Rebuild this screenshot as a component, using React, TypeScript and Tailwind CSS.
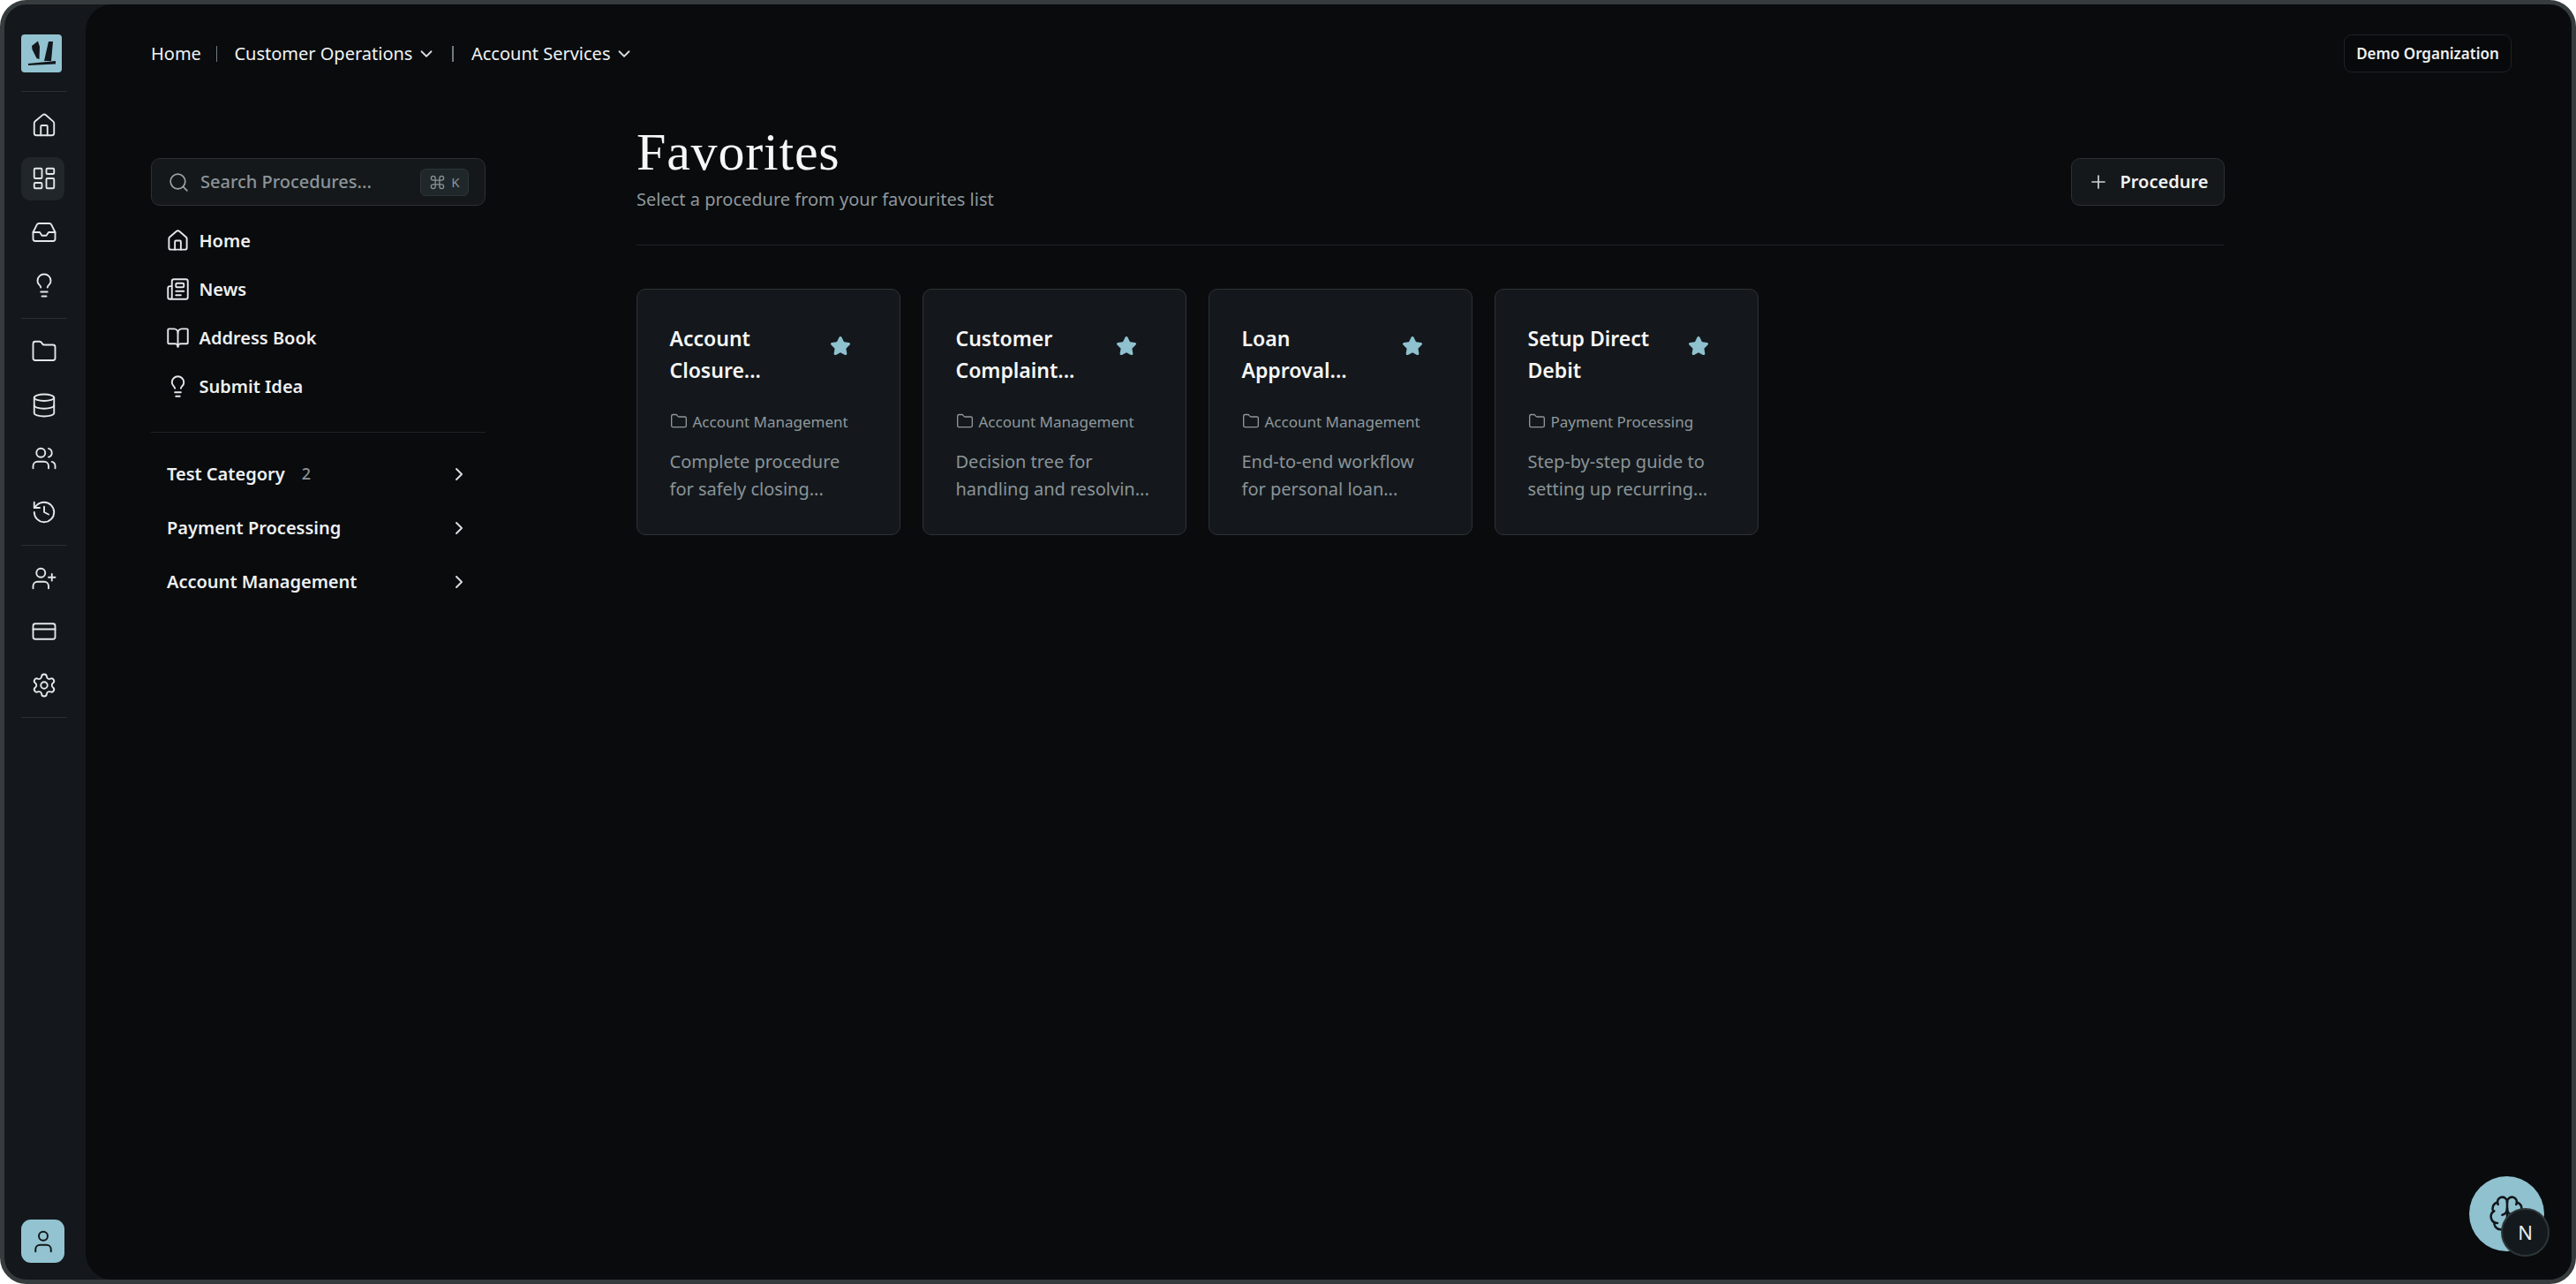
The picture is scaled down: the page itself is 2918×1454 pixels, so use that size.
import { Home, LayoutDashboard, Inbox, Lightbulb, Folder, Database, Users, History, UserPlus, CreditCard, Settings, User, Search, Command, ChevronDown, ChevronRight, Newspaper, BookOpen, Plus, Star, Brain } from "lucide-react";

const railGroups = [
  [Home, LayoutDashboard, Inbox, Lightbulb],
  [Folder, Database, Users, History],
  [UserPlus, CreditCard, Settings],
];

const navItems = [
  { icon: Home, label: "Home" },
  { icon: Newspaper, label: "News" },
  { icon: BookOpen, label: "Address Book" },
  { icon: Lightbulb, label: "Submit Idea" },
];

const cards = [
  { title: "Account Closure...", cat: "Account Management", desc: "Complete procedure for safely closing..." },
  { title: "Customer Complaint...", cat: "Account Management", desc: "Decision tree for handling and resolvin..." },
  { title: "Loan Approval...", cat: "Account Management", desc: "End-to-end workflow for personal loan..." },
  { title: "Setup Direct Debit", cat: "Payment Processing", desc: "Step-by-step guide to setting up recurring..." },
];

function Logo() {
  return (
    <div className="w-[46px] h-[43px] ml-[19px] rounded-[4px] bg-[#93c3d0] shrink-0">
      <svg viewBox="0 0 46 43" className="w-full h-full">
        <path d="M12 13 L19 7.5 L21 14 L20.5 28 L17.5 27 L12.5 17 Z" fill="#12171b" />
        <path d="M26 30 L31 8 L36 8 L34 30 Z" fill="#12171b" />
        <path d="M8 33 L39 30 L39 33.5 L8 35 Z" fill="#12171b" />
      </svg>
    </div>
  );
}

export default function App() {
  return (
    <div className="w-[2918px] h-[1454px] bg-white font-['Noto_Sans',sans-serif] overflow-hidden">
      <div className="w-full h-full flex rounded-[30px] border-[5px] border-[#363b3d] bg-[#14181c] overflow-hidden">
        <aside className="w-[92px] shrink-0 flex flex-col pt-[34px] pb-[19px]">
          <Logo />
          {railGroups.map((group, i) => (
            <div key={i} className="flex flex-col">
              <div className={i === 0 ? "ml-[19px] w-[52px] h-[1px] bg-[#2b3033] mt-[21px] mb-[13px]" : "ml-[19px] w-[52px] h-[1px] bg-[#2b3033] mt-[12.5px] mb-[12.5px]"} />
              <div className="flex flex-col gap-[11.5px] ml-[19px]">
                {group.map((Icon, j) => (
                  <div
                    key={j}
                    className={
                      i === 0 && j === 1
                        ? "w-[49px] h-[49px] pl-[3px] rounded-[10px] bg-[#20262a] flex items-center justify-center text-[#e4e8ea]"
                        : "w-[49px] h-[49px] pl-[3px] flex items-center justify-center text-[#e4e8ea]"
                    }
                  >
                    <Icon size={30} strokeWidth={1.5} />
                  </div>
                ))}
              </div>
              {i === 2 && <div className="ml-[19px] w-[52px] h-[1px] bg-[#2b3033] mt-[12px]" />}
            </div>
          ))}
          <div className="mt-auto ml-[19px] w-[49px] h-[49px] rounded-[11px] bg-[#93c3d0] flex items-center justify-center text-[#12171b]">
            <User size={30} strokeWidth={1.6} />
          </div>
        </aside>

        <main className="relative flex-1 flex flex-col rounded-l-[30px] bg-[#090b0d] text-white">
          <header className="flex items-center h-[43px] mt-[34px] pl-[74px] pr-[68px] text-[20px] text-[#f1f3f4]">
            <span>Home</span>
            <span className="w-[1.5px] h-[18px] bg-[#6f7a80] ml-[17px] mr-[19px]" />
            <span>Customer Operations</span>
            <ChevronDown size={22} strokeWidth={2} className="ml-[5px] text-[#d8dcde]" />
            <span className="w-[1.5px] h-[18px] bg-[#6f7a80] ml-[18px] mr-[20px]" />
            <span>Account Services</span>
            <ChevronDown size={22} strokeWidth={2} className="ml-[5px] text-[#d8dcde]" />
            <div className="ml-auto h-[43px] w-[190px] rounded-[9px] border-[1.5px] border-[#202427] bg-[#07090a] flex items-center justify-center text-[17px] font-semibold text-[#eef0f1]">
              Demo Organization
            </div>
          </header>

          <div className="flex items-start pl-[74px]">
            <nav className="w-[379px] shrink-0 mt-[97px]">
              <div className="h-[54px] rounded-[10px] border-[1.5px] border-[#2c3032] bg-[#15181a] flex items-center pl-[18px] pr-[18px] text-[#8b9599]">
                <Search size={25} strokeWidth={1.6} className="text-[#9aa3a7]" />
                <span className="ml-[12px] text-[20px] font-medium">Search Procedures...</span>
                <div className="ml-auto h-[31px] w-[55px] rounded-[6px] border border-[#2d3438] bg-[#20272b] flex items-center justify-center gap-[6px] text-[15px]">
                  <Command size={19} strokeWidth={1.6} />
                  <span>K</span>
                </div>
              </div>
              <div className="mt-[12px] pb-[24px] border-b border-[#1e2225]">
                {navItems.map(({ icon: Icon, label }) => (
                  <div key={label} className="h-[55px] flex items-center pl-[17px] gap-[10.5px] text-[20px] font-semibold text-[#eef0f1]">
                    <Icon size={27} strokeWidth={1.7} className="text-[#e4e8ea]" />
                    <span>{label}</span>
                  </div>
                ))}
              </div>
              <div className="mt-[16px]">
                {["Test Category", "Payment Processing", "Account Management"].map((label, i) => (
                  <div key={label} className="h-[61px] flex items-center pl-[18px] pr-[18px] text-[20px] font-semibold text-[#eef0f1]">
                    <span>{label}</span>
                    {i === 0 && <span className="ml-[19px] text-[18px] font-medium text-[#8b9599]">2</span>}
                    <ChevronRight size={24} strokeWidth={2} className="ml-auto text-[#d8dcde]" />
                  </div>
                ))}
              </div>
            </nav>

            <section className="w-[1799px] ml-[171px] mt-[54px]">
              <div className="flex items-start justify-between pb-[35px] border-b border-[#1e2225]">
                <div>
                  <h1 className="text-[60px] leading-[72px] tracking-[0.8px] font-['Liberation_Serif',serif] font-normal text-[#f6f7f7]">Favorites</h1>
                  <p className="mt-[2px] text-[20px] leading-[31.5px] text-[#8f989c]">Select a procedure from your favourites list</p>
                </div>
                <button className="mt-[43px] h-[54px] w-[174px] rounded-[10px] border-[1.5px] border-[#2c3032] bg-[#15181a] flex items-center justify-center gap-[13px] text-[20px] font-semibold text-[#f1f3f4]">
                  <Plus size={24} strokeWidth={1.7} className="text-[#d0d4d6]" />
                  Procedure
                </button>
              </div>

              <div className="flex gap-[25px] mt-[49px]">
                {cards.map((c) => (
                  <article key={c.title} className="w-[299px] h-[279px] rounded-[10px] border-[1.5px] border-[#2e3235] bg-[#14181c] pl-[36.5px] pr-[36.5px] pt-[37.5px]">
                    <div className="flex items-start">
                      <h2 className="w-[166px] text-[23px] leading-[36px] font-semibold text-[#f6f7f7]">{c.title}</h2>
                      <Star size={24} className="ml-[15px] mt-[15px] text-[#8fc1cf]" fill="#8fc1cf" strokeWidth={2} />
                    </div>
                    <div className="mt-[27.5px] h-[27px] flex items-center gap-[6px] text-[17px] text-[#8f989c]">
                      <Folder size={20} strokeWidth={1.6} className="-mt-[2px]" />
                      <span>{c.cat}</span>
                    </div>
                    <p className="mt-[15px] text-[20px] leading-[31px] text-[#8a9498]">{c.desc}</p>
                  </article>
                ))}
              </div>
            </section>
          </div>

          <div className="absolute left-[2700px] top-[1327px] w-[85px] h-[85px] rounded-full bg-[#8fc1cf] flex items-center justify-center text-[#12171b]">
            <Brain size={44} strokeWidth={1.4} className="-mt-[2px] ml-[1px]" />
          </div>
          <div className="absolute left-[2736px] top-[1363px] w-[55px] h-[55px] rounded-full bg-[#14191d] border-[2px] border-[#2e3538] flex items-center justify-center text-[22px] font-normal text-[#e8ebec]">
            N
          </div>
        </main>
      </div>
    </div>
  );
}
